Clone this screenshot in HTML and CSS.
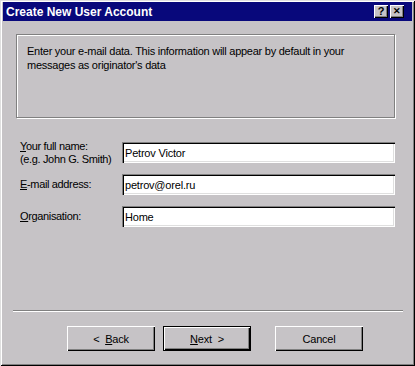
FILE: index.html
```html
<!DOCTYPE html>
<html lang="en">
<head>
    <meta charset="UTF-8">
    <title>Create New User Account</title>
    <link rel="stylesheet" href="styles.css">
</head>
<body>
    <div class="window">
        <!-- Title bar -->
        <div class="titlebar">
            <span class="title">Create New User Account</span>
            <div class="title-buttons">
                <span class="tb-btn">?</span>
                <span class="tb-btn close">&#x2715;</span>
            </div>
        </div>

        <div class="content">
            <div class="info">
                Enter your e-mail data. This information will appear by default in your<br>
                messages as originator's data
            </div>

            <div class="form">
                <label class="label two-line"><span><u>Y</u>our full name:</span><span>(e.g. John G. Smith)</span></label>
                <input class="field" type="text" value="Petrov Victor">

                <label class="label"><u>E</u>-mail address:</label>
                <input class="field" type="text" value="petrov@orel.ru">

                <label class="label"><u>O</u>rganisation:</label>
                <input class="field" type="text" value="Home">
            </div>

            <div class="separator"></div>

            <div class="buttons">
                <button class="btn">&lt;&nbsp; <u>B</u>ack</button>
                <button class="btn default"><u>N</u>ext&nbsp; &gt;</button>
                <button class="btn cancel">Cancel</button>
            </div>
        </div>
    </div>
</body>
</html>
```

FILE: styles.css
```css
body {
    margin: 0;
    background-color: #c6c3c6;
    font-family: "Liberation Sans", Arial, sans-serif;
    font-size: 11px;
    color: #000;
}

.window {
    width: 415px;
    height: 366px;
    box-sizing: border-box;
    padding: 2px 3px 3px 3px;
    background-color: #c6c3c6;
    box-shadow: inset 1px 1px 0 #dfdfdf, inset -1px -1px 0 #000,
                inset 2px 2px 0 #fff, inset -2px -2px 0 #808080;
}

.titlebar {
    height: 19px;
    background-color: #08087b;
    display: flex;
    align-items: center;
    justify-content: space-between;
    padding: 0 8px 0 3px;
}

.title {
    color: #fff;
    font-weight: bold;
    font-size: 12px;
}

.title-buttons {
    display: flex;
    gap: 2px;
}

.tb-btn {
    width: 14px;
    height: 13px;
    background-color: #c6c3c6;
    box-shadow: inset 1px 1px 0 #fff, inset -1px -1px 0 #000, inset -2px -2px 0 #808080;
    display: flex;
    align-items: center;
    justify-content: center;
    font-weight: bold;
    font-size: 11px;
    line-height: 1;
}

.tb-btn.close {
    font-size: 9px;
}

.content {
    padding: 13px 0 0 13px;
}

.info {
    width: 379px;
    height: 84px;
    box-sizing: border-box;
    border: 1px solid #808080;
    box-shadow: 1px 1px 0 #fff, inset 1px 1px 0 #fff;
    padding: 9px 10px 0;
    line-height: 14px;
    letter-spacing: -0.25px;
}

.form {
    display: grid;
    grid-template-columns: 102px 273px;
    grid-template-rows: 21px 21px 21px;
    row-gap: 11px;
    align-items: center;
    margin-top: 24px;
    padding-left: 4px;
    letter-spacing: -0.35px;
}

.label {
    line-height: 13px;
}

.two-line {
    display: flex;
    flex-direction: column;
}

.field {
    height: 21px;
    box-sizing: border-box;
    margin: 0;
    padding: 1px 3px 0;
    border: none;
    background-color: #fff;
    font-family: inherit;
    font-size: 11px;
    letter-spacing: -0.2px;
    box-shadow: inset 1px 1px 0 #808080, inset 2px 2px 0 #000,
                inset -1px -1px 0 #fff, inset -2px -2px 0 #dfdfdf;
}

.separator {
    width: 390px;
    margin: 83px 0 0 -3px;
    border-top: 1px solid #808080;
    border-bottom: 1px solid #fff;
}

.buttons {
    display: flex;
    margin-top: 14px;
    padding-left: 51px;
}

.btn {
    width: 88px;
    height: 25px;
    margin: 0;
    padding: 0;
    border: none;
    background-color: #c6c3c6;
    font-family: inherit;
    font-size: 11px;
    letter-spacing: -0.2px;
    color: #000;
    box-shadow: inset 1px 1px 0 #fff, inset -1px -1px 0 #000, inset -2px -2px 0 #808080;
}

.btn.default {
    margin-left: 8px;
    border: 1px solid #000;
}

.btn.cancel {
    margin-left: 24px;
}
```
